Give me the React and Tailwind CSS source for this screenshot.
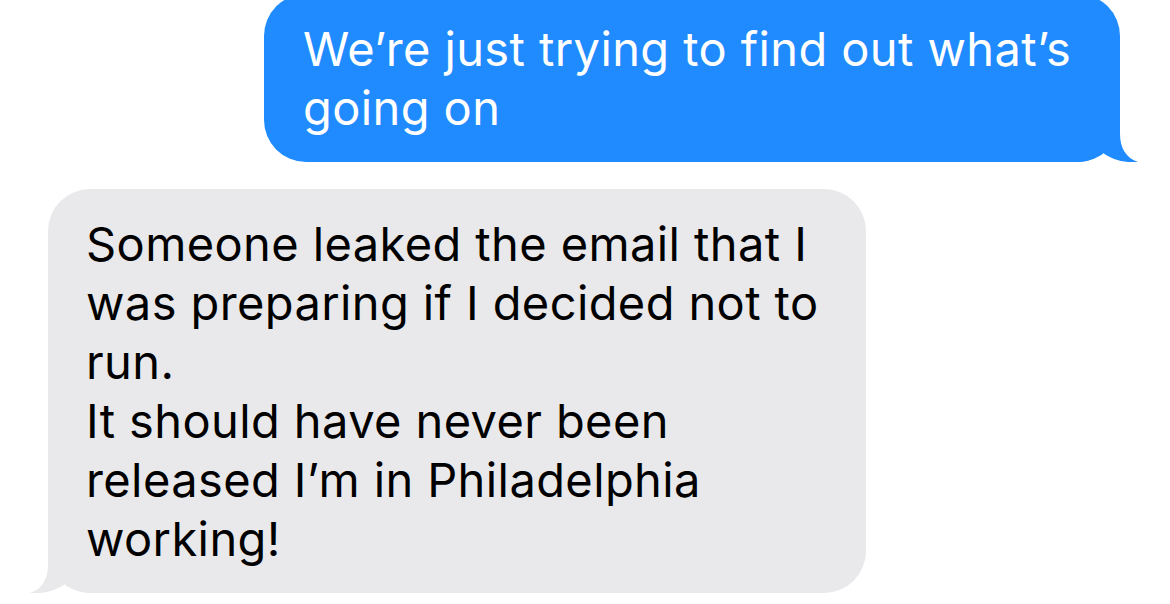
import React from 'react';

function Tail({ color, side }) {
  // bubble tail, drawn for the right side and mirrored for the left
  return (
    <svg
      width="80"
      height="54"
      viewBox="0 0 80 54"
      className={
        side === 'right'
          ? 'absolute bottom-0 right-[-20px]'
          : 'absolute bottom-0 left-[-20px] scale-x-[-1]'
      }
    >
      <path
        d="M0 0 L60 0 L60 26 C60 40 66 50 78 54 C64 55 52 52 42 44 C36 50 28 54 18 54 L0 54 Z"
        fill={color}
      />
    </svg>
  );
}

export default function App() {
  return (
    <div className="w-[1170px] h-[604px] overflow-hidden bg-white font-['Inter','Liberation_Sans',sans-serif] text-[47px] leading-[59px] tracking-[0.4px]">
      <div className="flex flex-col">
        {/* Sent */}
        <div className="flex justify-end pr-[50px] mt-[-6px]">
          <div className="relative w-[856px] h-[168px] rounded-[42px] bg-[#1f8bff] text-white pl-[39px] pt-[25px]">
            <p className="relative z-10">
              We’re just trying to find out what’s
              <br />
              going on
            </p>
            <Tail color="#1f8bff" side="right" />
          </div>
        </div>

        {/* Received */}
        <div className="flex justify-start pl-[48px] mt-[27px]">
          <div className="relative w-[818px] h-[404px] rounded-[42px] bg-[#e9e9eb] text-black pl-[38px] pt-[25px]">
            <p className="relative z-10">
              Someone leaked the email that I
              <br />
              was preparing if I decided not to
              <br />
              run.
              <br />
              It should have never been
              <br />
              released I’m in Philadelphia
              <br />
              working!
            </p>
            <Tail color="#e9e9eb" side="left" />
          </div>
        </div>
      </div>
    </div>
  );
}
